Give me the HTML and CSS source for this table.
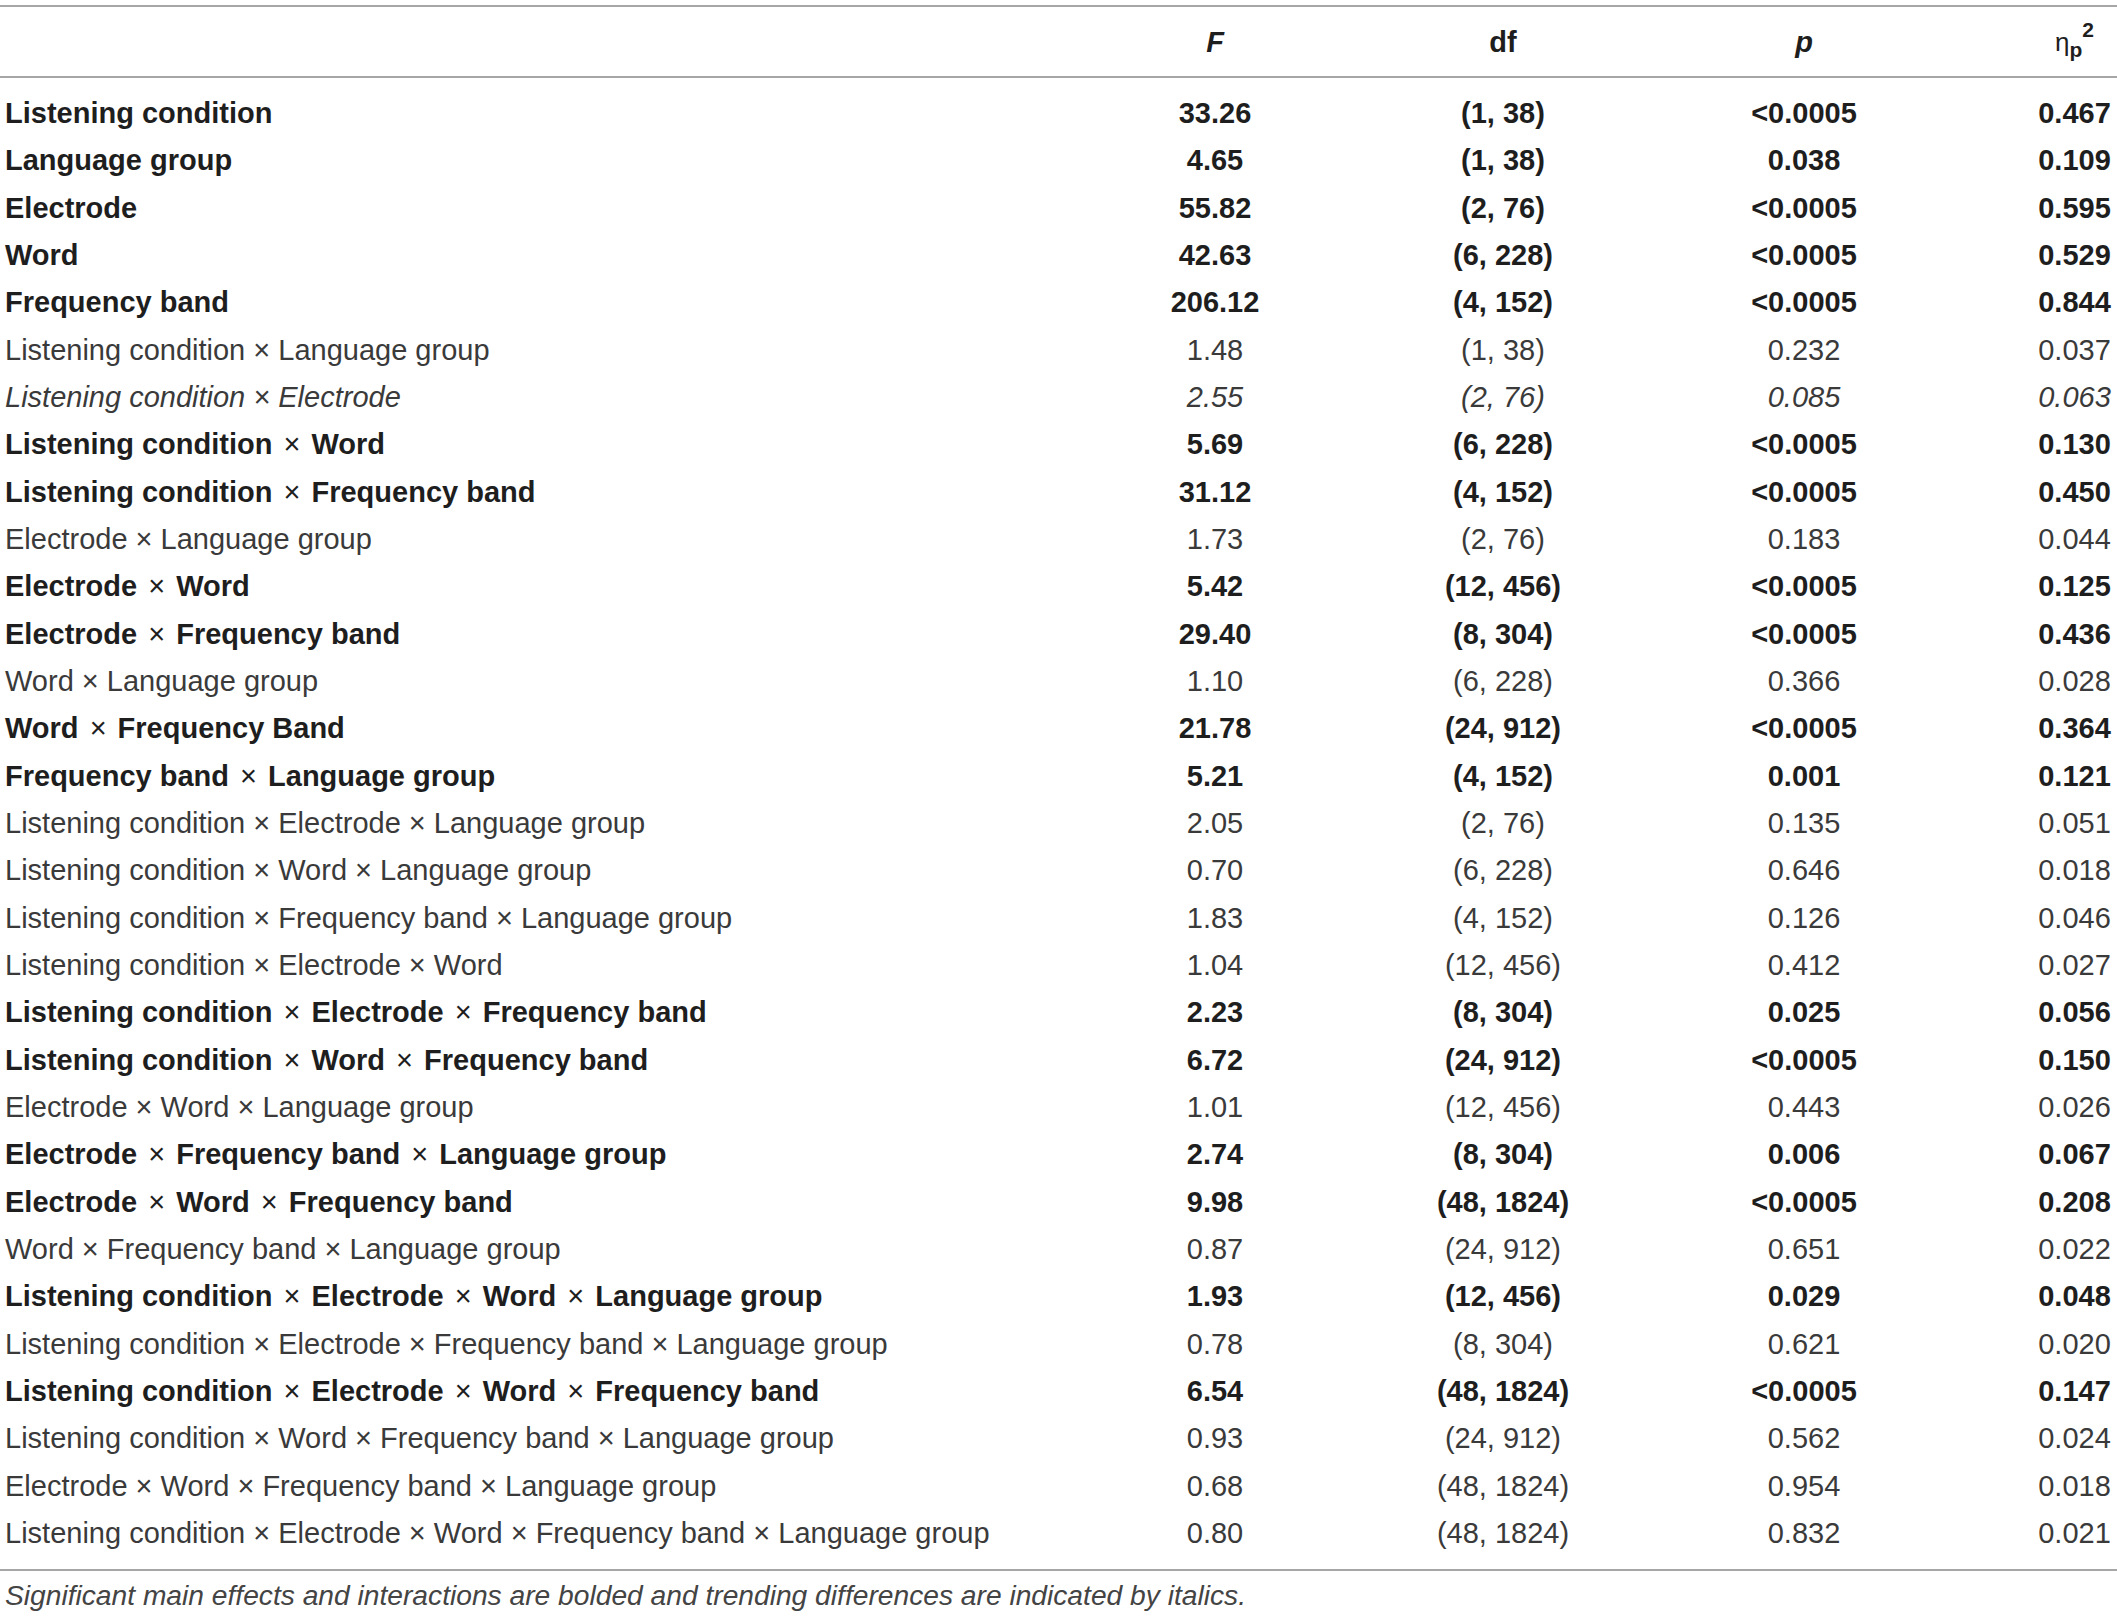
FILE: index.html
```html
<!DOCTYPE html>
<html>
<head>
<meta charset="utf-8">
<link rel="stylesheet" href="styles.css">
</head>
<body>
<div class="wrap">
<table class="anova">
<colgroup>
<col class="c-label"><col class="c-f"><col class="c-df"><col class="c-p"><col class="c-eta">
</colgroup>
<thead>
<tr>
<th class="label"></th>
<th class="num"><i>F</i></th>
<th class="num">df</th>
<th class="num"><i>p</i></th>
<th class="num eta"><span class="eta-sym">η</span><sub>p</sub><sup>2</sup></th>
</tr>
</thead>
<tbody>
<tr class="b first"><td class="label">Listening condition</td><td class="num">33.26</td><td class="num">(1, 38)</td><td class="num">&lt;0.0005</td><td class="num eta">0.467</td></tr>
<tr class="b"><td class="label">Language group</td><td class="num">4.65</td><td class="num">(1, 38)</td><td class="num">0.038</td><td class="num eta">0.109</td></tr>
<tr class="b"><td class="label">Electrode</td><td class="num">55.82</td><td class="num">(2, 76)</td><td class="num">&lt;0.0005</td><td class="num eta">0.595</td></tr>
<tr class="b"><td class="label">Word</td><td class="num">42.63</td><td class="num">(6, 228)</td><td class="num">&lt;0.0005</td><td class="num eta">0.529</td></tr>
<tr class="b"><td class="label">Frequency band</td><td class="num">206.12</td><td class="num">(4, 152)</td><td class="num">&lt;0.0005</td><td class="num eta">0.844</td></tr>
<tr class="r"><td class="label">Listening condition × Language group</td><td class="num">1.48</td><td class="num">(1, 38)</td><td class="num">0.232</td><td class="num eta">0.037</td></tr>
<tr class="i"><td class="label">Listening condition × Electrode</td><td class="num">2.55</td><td class="num">(2, 76)</td><td class="num">0.085</td><td class="num eta">0.063</td></tr>
<tr class="b"><td class="label">Listening condition <span class="op">×</span> Word</td><td class="num">5.69</td><td class="num">(6, 228)</td><td class="num">&lt;0.0005</td><td class="num eta">0.130</td></tr>
<tr class="b"><td class="label">Listening condition <span class="op">×</span> Frequency band</td><td class="num">31.12</td><td class="num">(4, 152)</td><td class="num">&lt;0.0005</td><td class="num eta">0.450</td></tr>
<tr class="r"><td class="label">Electrode × Language group</td><td class="num">1.73</td><td class="num">(2, 76)</td><td class="num">0.183</td><td class="num eta">0.044</td></tr>
<tr class="b"><td class="label">Electrode <span class="op">×</span> Word</td><td class="num">5.42</td><td class="num">(12, 456)</td><td class="num">&lt;0.0005</td><td class="num eta">0.125</td></tr>
<tr class="b"><td class="label">Electrode <span class="op">×</span> Frequency band</td><td class="num">29.40</td><td class="num">(8, 304)</td><td class="num">&lt;0.0005</td><td class="num eta">0.436</td></tr>
<tr class="r"><td class="label">Word × Language group</td><td class="num">1.10</td><td class="num">(6, 228)</td><td class="num">0.366</td><td class="num eta">0.028</td></tr>
<tr class="b"><td class="label">Word <span class="op">×</span> Frequency Band</td><td class="num">21.78</td><td class="num">(24, 912)</td><td class="num">&lt;0.0005</td><td class="num eta">0.364</td></tr>
<tr class="b"><td class="label">Frequency band <span class="op">×</span> Language group</td><td class="num">5.21</td><td class="num">(4, 152)</td><td class="num">0.001</td><td class="num eta">0.121</td></tr>
<tr class="r"><td class="label">Listening condition × Electrode × Language group</td><td class="num">2.05</td><td class="num">(2, 76)</td><td class="num">0.135</td><td class="num eta">0.051</td></tr>
<tr class="r"><td class="label">Listening condition × Word × Language group</td><td class="num">0.70</td><td class="num">(6, 228)</td><td class="num">0.646</td><td class="num eta">0.018</td></tr>
<tr class="r"><td class="label">Listening condition × Frequency band × Language group</td><td class="num">1.83</td><td class="num">(4, 152)</td><td class="num">0.126</td><td class="num eta">0.046</td></tr>
<tr class="r"><td class="label">Listening condition × Electrode × Word</td><td class="num">1.04</td><td class="num">(12, 456)</td><td class="num">0.412</td><td class="num eta">0.027</td></tr>
<tr class="b"><td class="label">Listening condition <span class="op">×</span> Electrode <span class="op">×</span> Frequency band</td><td class="num">2.23</td><td class="num">(8, 304)</td><td class="num">0.025</td><td class="num eta">0.056</td></tr>
<tr class="b"><td class="label">Listening condition <span class="op">×</span> Word <span class="op">×</span> Frequency band</td><td class="num">6.72</td><td class="num">(24, 912)</td><td class="num">&lt;0.0005</td><td class="num eta">0.150</td></tr>
<tr class="r"><td class="label">Electrode × Word × Language group</td><td class="num">1.01</td><td class="num">(12, 456)</td><td class="num">0.443</td><td class="num eta">0.026</td></tr>
<tr class="b"><td class="label">Electrode <span class="op">×</span> Frequency band <span class="op">×</span> Language group</td><td class="num">2.74</td><td class="num">(8, 304)</td><td class="num">0.006</td><td class="num eta">0.067</td></tr>
<tr class="b"><td class="label">Electrode <span class="op">×</span> Word <span class="op">×</span> Frequency band</td><td class="num">9.98</td><td class="num">(48, 1824)</td><td class="num">&lt;0.0005</td><td class="num eta">0.208</td></tr>
<tr class="r"><td class="label">Word × Frequency band × Language group</td><td class="num">0.87</td><td class="num">(24, 912)</td><td class="num">0.651</td><td class="num eta">0.022</td></tr>
<tr class="b"><td class="label">Listening condition <span class="op">×</span> Electrode <span class="op">×</span> Word <span class="op">×</span> Language group</td><td class="num">1.93</td><td class="num">(12, 456)</td><td class="num">0.029</td><td class="num eta">0.048</td></tr>
<tr class="r"><td class="label">Listening condition × Electrode × Frequency band × Language group</td><td class="num">0.78</td><td class="num">(8, 304)</td><td class="num">0.621</td><td class="num eta">0.020</td></tr>
<tr class="b"><td class="label">Listening condition <span class="op">×</span> Electrode <span class="op">×</span> Word <span class="op">×</span> Frequency band</td><td class="num">6.54</td><td class="num">(48, 1824)</td><td class="num">&lt;0.0005</td><td class="num eta">0.147</td></tr>
<tr class="r"><td class="label">Listening condition × Word × Frequency band × Language group</td><td class="num">0.93</td><td class="num">(24, 912)</td><td class="num">0.562</td><td class="num eta">0.024</td></tr>
<tr class="r"><td class="label">Electrode × Word × Frequency band × Language group</td><td class="num">0.68</td><td class="num">(48, 1824)</td><td class="num">0.954</td><td class="num eta">0.018</td></tr>
<tr class="r last"><td class="label">Listening condition × Electrode × Word × Frequency band × Language group</td><td class="num">0.80</td><td class="num">(48, 1824)</td><td class="num">0.832</td><td class="num eta">0.021</td></tr>
</tbody>
</table>
<p class="note">Significant main effects and interactions are bolded and trending differences are indicated by italics.</p>
</div>
</body>
</html>
```
FILE: styles.css
```css
html, body {
  margin: 0;
  padding: 0;
  background: #ffffff;
}
.wrap {
  padding-top: 5px;
  font-family: "Liberation Sans", Arial, sans-serif;
  font-size: 29px;
  color: #333333;
}
.anova {
  width: 2117px;
  table-layout: fixed;
  border-collapse: collapse;
  border-top: 2px solid #a6a6a6;
  border-bottom: 2px solid #a6a6a6;
}
.c-label { width: 1100px; }
.c-f { width: 230px; }
.c-df { width: 346px; }
.c-p { width: 256px; }
.c-eta { width: 185px; }
.anova th {
  height: 68px;
  line-height: 68px;
  padding: 0;
  font-weight: bold;
  color: #1e1e1e;
  border-bottom: 2px solid #a6a6a6;
}
.anova td {
  height: 47.33px;
  line-height: 47.33px;
  padding: 0;
  white-space: nowrap;
}
.anova .label {
  text-align: left;
  padding-left: 5px;
}
.anova .num {
  text-align: center;
}
.anova .eta {
  padding-left: 100px;
  padding-right: 0;
}
.anova tr.first td {
  padding-top: 12px;
}
.anova tr.last td {
  padding-bottom: 12px;
}
.anova tr.b td {
  font-weight: bold;
  color: #1e1e1e;
}
.anova tr.b .op {
  font-weight: normal;
  margin: 0 3px;
}
.anova tr.r td {
  color: #3a3a3a;
}
.anova tr.i td {
  font-style: italic;
  color: #3a3a3a;
}
.eta-sym {
  font-weight: normal;
  font-size: 26px;
}
.anova th sub {
  font-size: 21px;
  vertical-align: -6px;
  line-height: 0;
}
.anova th sup {
  font-size: 21px;
  vertical-align: 14px;
  line-height: 0;
}
.note {
  margin: 0;
  padding: 8px 0 0 5px;
  font-style: italic;
  font-size: 28.2px;
  color: #444444;
  line-height: 32px;
}
```
